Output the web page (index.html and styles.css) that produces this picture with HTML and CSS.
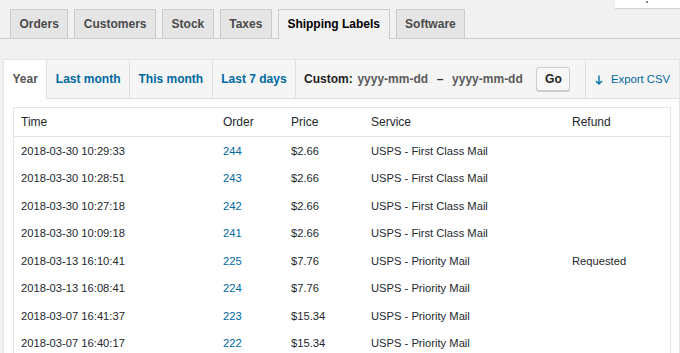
FILE: index.html
```html
<!DOCTYPE html>
<html lang="en">
<head>
<meta charset="utf-8">
<title>Reports - Shipping Labels</title>
<link rel="stylesheet" href="styles.css">
</head>
<body>
<div class="screen-meta">
  <div class="screen-tab"><span class="screen-dot"></span></div>
</div>
<nav class="nav-tabs">
  <a class="nav-tab">Orders</a>
  <a class="nav-tab">Customers</a>
  <a class="nav-tab">Stock</a>
  <a class="nav-tab">Taxes</a>
  <a class="nav-tab active">Shipping Labels</a>
  <a class="nav-tab">Software</a>
</nav>
<div class="postbox">
  <ul class="stats-range">
    <li class="range active"><a>Year</a></li>
    <li class="range"><a>Last month</a></li>
    <li class="range"><a>This month</a></li>
    <li class="range"><a>Last 7 days</a></li>
    <li class="custom">
      <span class="custom-label">Custom:</span>
      <input class="range-date" type="text" placeholder="yyyy-mm-dd">
      <span class="range-dash">–</span>
      <input class="range-date" type="text" placeholder="yyyy-mm-dd">
      <button class="go-btn" type="button">Go</button>
    </li>
    <li class="export">
      <a class="export-link">
        <svg class="export-icon" width="8" height="10" viewBox="0 0 8 10" aria-hidden="true">
          <path d="M4 0.5 V9 M1 6 L4 9 L7 6" fill="none" stroke="#0073aa" stroke-width="1.4"/>
        </svg>
        Export CSV
      </a>
    </li>
  </ul>
  <div class="inside">
    <table class="labels">
      <colgroup>
        <col class="c-time">
        <col class="c-order">
        <col class="c-price">
        <col class="c-service">
        <col class="c-refund">
      </colgroup>
      <thead>
        <tr><th>Time</th><th>Order</th><th>Price</th><th>Service</th><th>Refund</th></tr>
      </thead>
      <tbody>
        <tr><td>2018-03-30 10:29:33</td><td><a>244</a></td><td>$2.66</td><td>USPS - First Class Mail</td><td></td></tr>
        <tr><td>2018-03-30 10:28:51</td><td><a>243</a></td><td>$2.66</td><td>USPS - First Class Mail</td><td></td></tr>
        <tr><td>2018-03-30 10:27:18</td><td><a>242</a></td><td>$2.66</td><td>USPS - First Class Mail</td><td></td></tr>
        <tr><td>2018-03-30 10:09:18</td><td><a>241</a></td><td>$2.66</td><td>USPS - First Class Mail</td><td></td></tr>
        <tr><td>2018-03-13 16:10:41</td><td><a>225</a></td><td>$7.76</td><td>USPS - Priority Mail</td><td>Requested</td></tr>
        <tr><td>2018-03-13 16:08:41</td><td><a>224</a></td><td>$7.76</td><td>USPS - Priority Mail</td><td></td></tr>
        <tr><td>2018-03-07 16:41:37</td><td><a>223</a></td><td>$15.34</td><td>USPS - Priority Mail</td><td></td></tr>
        <tr><td>2018-03-07 16:40:17</td><td><a>222</a></td><td>$15.34</td><td>USPS - Priority Mail</td><td></td></tr>
      </tbody>
    </table>
  </div>
</div>
</body>
</html>
```

FILE: styles.css
```css
* { box-sizing: border-box; }
html, body { margin: 0; padding: 0; }
body {
  background: #f1f1f1;
  font-family: "Liberation Sans", Arial, sans-serif;
  color: #23282d;
  height: 353px;
  overflow: hidden;
}

.screen-meta {
  display: flex;
  justify-content: flex-end;
  height: 8px;
}
.screen-tab {
  width: 65px;
  height: 8px;
  background: #fff;
  box-shadow: 0 1px 1px rgba(0,0,0,0.12);
  display: flex;
  justify-content: center;
}
.screen-dot {
  width: 2px;
  height: 2px;
  margin-top: 1px;
  margin-left: -2px;
  background: #888;
}

.nav-tabs {
  display: flex;
  align-items: flex-end;
  gap: 6px;
  margin-top: 1px;
  padding-left: 10px;
  border-bottom: 1px solid #ccc;
}
.nav-tab {
  height: 29px;
  padding: 0 8.5px;
  border: 1px solid #ccc;
  border-bottom: 0;
  background: #e5e5e5;
  color: #4a4a4a;
  font-size: 12px;
  font-weight: bold;
  line-height: 28px;
}
.nav-tab.active {
  height: 30px;
  margin-bottom: -1px;
  background: #f1f1f1;
  color: #000;
}

.postbox {
  margin: 20px 0 0 3px;
  background: #fff;
  border: 1px solid #e5e5e5;
  box-shadow: 0 1px 1px rgba(0,0,0,0.04);
}

.stats-range {
  display: flex;
  margin: 0;
  padding: 0;
  list-style: none;
  background: #f5f5f5;
  border-bottom: 1px solid #dfdfdf;
  height: 39px;
}
.range {
  border-right: 1px solid #dfdfdf;
  font-size: 12px;
  font-weight: bold;
  line-height: 38px;
}
.range a {
  display: block;
  padding: 0 8.5px;
  color: #0068a0;
}
.range.active {
  background: #fff;
  height: 39px;
}
.range.active a { color: #555; }

.custom {
  display: flex;
  align-items: center;
  padding: 0 8px;
  font-size: 12px;
  font-weight: bold;
  color: #222;
}
.custom-label { margin-right: 4px; }
.range-date {
  width: 72px;
  padding: 0;
  margin: 0;
  border: 0;
  background: transparent;
  font: bold 12px "Liberation Sans", Arial, sans-serif;
  color: #5a5a5a;
  text-align: center;
}
.range-date::placeholder { color: #5a5a5a; opacity: 1; }
.range-dash {
  margin: 0 8px;
  color: #333;
}
.go-btn {
  margin-left: 13px;
  width: 34px;
  height: 24px;
  padding: 0;
  border: 1px solid #ccc;
  border-radius: 3px;
  background: #f7f7f7;
  box-shadow: 0 1px 0 #ccc;
  font: bold 12px "Liberation Sans", Arial, sans-serif;
  color: #222;
}

.export {
  margin-left: auto;
  border-left: 1px solid #dfdfdf;
  display: flex;
  align-items: center;
}
.export-link {
  display: flex;
  align-items: center;
  padding: 0 9px;
  font-size: 11.3px;
  color: #0068a0;
}
.export-icon { margin-right: 8px; margin-top: 1px; }

.inside {
  padding: 8px 8px 0 9px;
}
.labels {
  width: 658px;
  table-layout: fixed;
  border-collapse: separate;
  border-spacing: 0;
  border: 1px solid #e5e5e5;
  box-shadow: 0 1px 1px rgba(0,0,0,0.04);
  background: #fff;
}
.c-time { width: 202px; }
.c-order { width: 68px; }
.c-price { width: 80px; }
.c-service { width: 201px; }
.c-refund { width: 105px; }

.labels th {
  height: 29px;
  padding: 0 7px;
  text-align: left;
  font-weight: normal;
  font-size: 12px;
  color: #23282d;
  border-bottom: 1px solid #e1e1e1;
}
.labels td {
  height: 27.5px;
  padding: 0 7px;
  font-size: 11.2px;
  color: #23282d;
  white-space: nowrap;
}
.labels td a { color: #0068a0; }
```
